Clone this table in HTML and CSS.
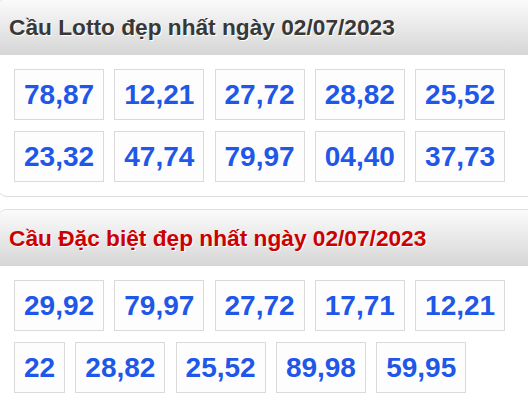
FILE: index.html
```html
<!DOCTYPE html>
<html lang="vi">
<head>
  <meta charset="UTF-8">
  <meta name="viewport" content="width=device-width, initial-scale=1.0">
  <title>Cầu Lotto đẹp nhất ngày 02/07/2023</title>
  <link rel="stylesheet" href="styles.css">
</head>
<body>
  <div class="box-cau">
    <h2 class="box-title">Cầu Lotto đẹp nhất ngày 02/07/2023</h2>
    <div class="box-numbers">
      <span class="num">78,87</span>
      <span class="num">12,21</span>
      <span class="num">27,72</span>
      <span class="num">28,82</span>
      <span class="num">25,52</span>
      <span class="num">23,32</span>
      <span class="num">47,74</span>
      <span class="num">79,97</span>
      <span class="num">04,40</span>
      <span class="num">37,73</span>
    </div>
  </div>

  <div class="box-cau">
    <h2 class="box-title red">Cầu Đặc biệt đẹp nhất ngày 02/07/2023</h2>
    <div class="box-numbers">
      <span class="num">29,92</span>
      <span class="num">79,97</span>
      <span class="num">27,72</span>
      <span class="num">17,71</span>
      <span class="num">12,21</span>
      <span class="num">22</span>
      <span class="num">28,82</span>
      <span class="num">25,52</span>
      <span class="num">89,98</span>
      <span class="num">59,95</span>
    </div>
  </div>
</body>
</html>
```

FILE: styles.css
```css
html, body {
  margin: 0;
  padding: 0;
  overflow: hidden;
  background: #fff;
  font-family: "Liberation Sans", Arial, sans-serif;
}

body {
  margin-top: -2px;
}

.box-cau {
  width: 560px;
  margin: 0 0 12px -3px;
  background: #fff;
  border: 1px solid #ddd;
  border-radius: 10px;
  overflow: hidden;
}

.box-title {
  margin: 0;
  padding: 0 0 0 11px;
  height: 56px;
  line-height: 56px;
  font-size: 22.7px;
  font-weight: bold;
  color: #383838;
  text-shadow: 1px 1px 0 #fff;
  background: linear-gradient(to bottom, #fbfbfb, #d6d6d6);
}

.box-title.red {
  color: #cc0000;
}

.box-numbers {
  display: flex;
  flex-wrap: wrap;
  column-gap: 10.2px;
  row-gap: 11px;
  padding: 14px 16px 14px 16px;
}

.num {
  padding: 0 9px;
  height: 49px;
  line-height: 49px;
  font-size: 28px;
  font-weight: bold;
  color: #1f57e8;
  background: #fdfdfd;
  border: 1px solid #dadada;
}
```
